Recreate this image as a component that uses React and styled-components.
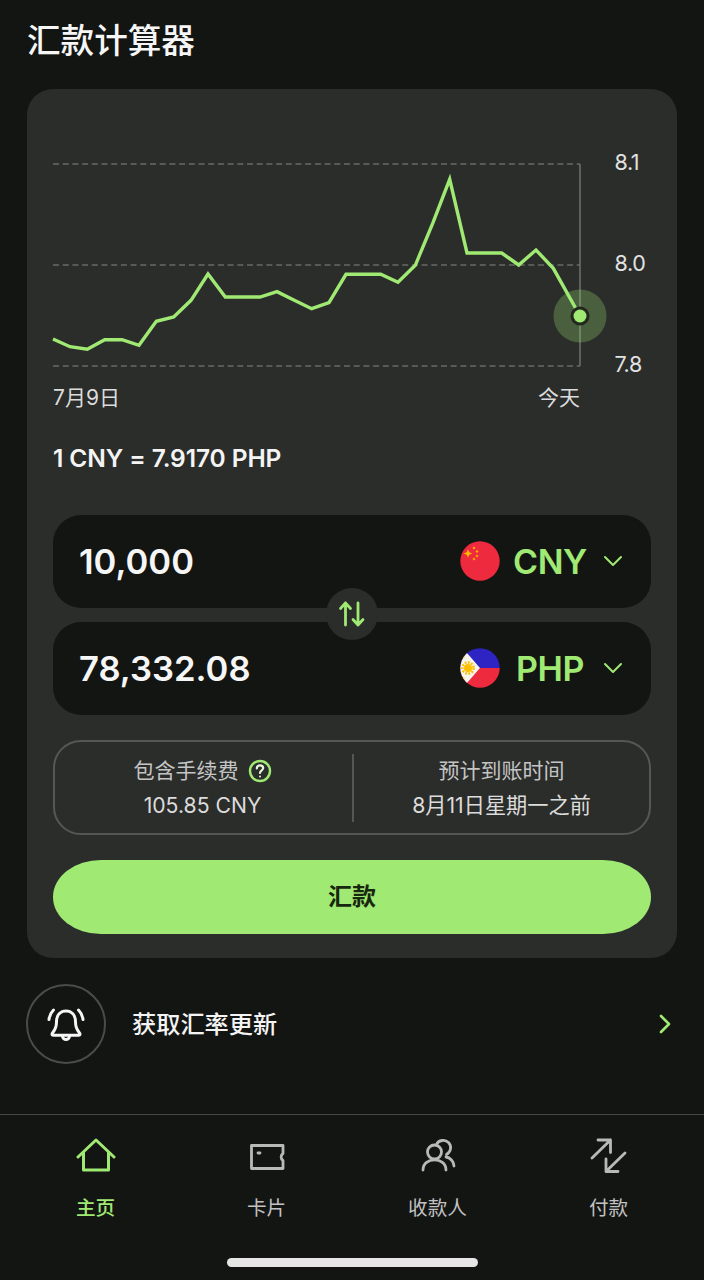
import React from 'react';
import styled, { createGlobalStyle } from 'styled-components';

const GREEN = '#a0e973';
const FONT = `Inter, "Noto Sans CJK SC", sans-serif`;

const Global = createGlobalStyle`
  html, body { margin: 0; padding: 0; background: #131513; }
  * { box-sizing: border-box; }
`;

const Screen = styled.div`
  width: 704px;
  height: 1280px;
  display: flex;
  flex-direction: column;
  background: #131513;
  color: #f4f4f4;
  font-family: ${FONT};
  overflow: hidden;
`;

const Title = styled.h1`
  margin: 0;
  padding: 17px 27px 0;
  height: 89px;
  font-size: 33.6px;
  line-height: 47px;
  font-weight: 500;
  color: #f6f6f6;
`;

const Card = styled.section`
  margin: 0 27px;
  height: 869px;
  padding: 75px 26px 0;
  border-radius: 26px;
  background: #2b2d2b;
  display: flex;
  flex-direction: column;
`;

const ChartRow = styled.div`
  display: grid;
  grid-template-columns: 529px 1fr;
  column-gap: 33px;
  height: 216px;
`;

const Plot = styled.svg`
  display: block;
  overflow: visible;
`;

const Axis = styled.div`
  height: 228px;
  margin-top: -15px;
  margin-left: -0.5px;
  display: flex;
  flex-direction: column;
  justify-content: space-between;
  font-size: 21.5px;
  line-height: 26px;
  letter-spacing: -0.4px;
  color: #e2e2e2;
`;

const DateRow = styled.div`
  width: 527px;
  margin-top: 4px;
  display: flex;
  justify-content: space-between;
  font-size: 21px;
  line-height: 28px;
  color: #dcdcdc;
`;

const Rate = styled.div`
  margin-top: 30px;
  font-size: 24.5px;
  line-height: 32px;
  font-weight: 600;
  letter-spacing: -0.1px;
  color: #f4f4f4;
`;

const Fields = styled.div`
  position: relative;
  margin-top: 41px;
  display: flex;
  flex-direction: column;
  gap: 14.5px;
`;

const Field = styled.div`
  height: 92.5px;
  padding: 0 28px 0 26px;
  border-radius: 28px;
  background: #131513;
  display: flex;
  align-items: center;
`;

const Amount = styled.div`
  flex: 1;
  font-size: 34.6px;
  font-weight: 600;
  color: #f6f6f6;
`;

const Code = styled.div`
  width: 90px;
  margin-left: 5px;
  text-align: center;
  font-size: 34px;
  font-weight: 600;
  letter-spacing: -0.4px;
  color: ${GREEN};
`;

const Caret = styled.svg`
  display: block;
  margin-left: 8px;
`;

const Swap = styled.div`
  position: absolute;
  left: 273px;
  top: 73px;
  width: 52px;
  height: 52px;
  border-radius: 50%;
  background: #2b2d2b;
  display: flex;
  align-items: center;
  justify-content: center;
`;

const Info = styled.div`
  margin-top: 25.5px;
  height: 95px;
  border: 2px solid #555755;
  border-radius: 28px;
  display: grid;
  grid-template-columns: 297px 2px 1fr;
  align-items: center;
`;

const InfoCol = styled.div`
  display: flex;
  flex-direction: column;
  align-items: center;
  gap: 6px;
  padding-right: ${(p) => (p.$first ? '2px' : '0')};
  font-size: 21.2px;
  line-height: 28px;
  color: #dcdcdc;
`;

const InfoHead = styled.div`
  display: flex;
  align-items: center;
  gap: 9px;
  font-size: 21px;
  color: #c4c4c4;
`;

const Divider = styled.div`
  width: 2px;
  height: 68px;
  background: #555755;
`;

const Submit = styled.button`
  margin-top: 25px;
  height: 73.5px;
  padding: 0 0 4px;
  border: 0;
  border-radius: 48px / 36.75px;
  background: ${GREEN};
  color: #18280f;
  font-family: ${FONT};
  font-size: 24px;
  font-weight: 700;
`;

const AlertRow = styled.div`
  margin: 26px 32px 0 26px;
  display: flex;
  align-items: center;
`;

const BellRing = styled.div`
  width: 80px;
  height: 80px;
  border: 2px solid #4a4c4a;
  border-radius: 50%;
  display: flex;
  align-items: center;
  justify-content: center;
`;

const AlertLabel = styled.div`
  flex: 1;
  margin-left: 26px;
  padding-bottom: 4px;
  font-size: 24.2px;
  font-weight: 500;
  color: #f4f4f4;
`;

const Nav = styled.nav`
  margin-top: 50px;
  flex: 1;
  padding: 23px 10px 0;
  border-top: 1.5px solid #464846;
  position: relative;
  display: grid;
  grid-template-columns: repeat(4, 1fr);
  align-items: start;
`;

const NavItem = styled.div`
  display: flex;
  flex-direction: column;
  align-items: center;
  gap: 20px;
  font-size: 19.6px;
  line-height: 28px;
  color: ${(p) => (p.$active ? GREEN : '#c2c2c2')};
  font-weight: ${(p) => (p.$active ? 500 : 400)};
`;

const Handle = styled.div`
  position: absolute;
  left: 227px;
  top: 143px;
  width: 251px;
  height: 9px;
  border-radius: 5px;
  background: #e6e6e6;
`;

// chart points in px, origin is the left end of the top gridline
const points = [
  [0, 175], [17, 182.7], [34.3, 185.3], [51.7, 175.7], [69, 175.7], [86, 181.3],
  [103.3, 157.3], [120.7, 153], [138, 136.3], [155, 110], [172.3, 133], [189.7, 133],
  [207, 133], [224, 127.7], [241.3, 136.3], [258.7, 144.7], [276, 138.7], [293, 110.3],
  [310.5, 110.3], [327.7, 110.3], [345, 118.3], [362.3, 101.3], [379.7, 59.3], [396.7, 15.3],
  [414, 89], [431.3, 89], [448.7, 89], [465.7, 101], [483, 86], [500.3, 104.3], [527, 152],
];

function Chart() {
  const path = points.map((p) => p.join(',')).join(' ');
  return (
    <Plot width="529" height="204" viewBox="0 0 529 204">
      {[0, 101, 202].map((y) => (
        <line key={y} x1="0" x2="527" y1={y} y2={y} stroke="#686a68" strokeWidth="1.3" strokeDasharray="6 3.7" />
      ))}
      <line x1="527" x2="527" y1="0" y2="202" stroke="#6f716f" strokeWidth="1.5" />
      <polyline points={path} fill="none" stroke={GREEN} strokeWidth="3.4" strokeLinejoin="miter" />
      <circle cx="527" cy="152" r="26.5" fill={GREEN} fillOpacity="0.27" />
      <circle cx="527" cy="152" r="9.5" fill="#22281e" />
      <circle cx="527" cy="152" r="6.5" fill={GREEN} />
    </Plot>
  );
}

function ChinaFlag() {
  const stars = [[14, 7], [17, 10.5], [17, 15], [14, 18]];
  return (
    <svg width="40" height="40" viewBox="0 0 40 40">
      <circle cx="20" cy="20" r="19.7" fill="#ee2a3e" />
      <polygon points="8,8.2 9.3,11.2 12.5,12.5 9.3,13.8 8,16.8 6.7,13.8 3.5,12.5 6.7,11.2" fill="#fdb600" />
      {stars.map(([x, y]) => (
        <rect key={x + '-' + y} x={x - 1.1} y={y - 1.1} width="2.2" height="2.2" fill="#fdb000" transform={`rotate(45 ${x} ${y})`} />
      ))}
    </svg>
  );
}

function PhilippinesFlag() {
  return (
    <svg width="40" height="40" viewBox="0 0 40 40">
      <defs>
        <clipPath id="ph">
          <circle cx="20" cy="20" r="19.7" />
        </clipPath>
      </defs>
      <g clipPath="url(#ph)">
        <rect width="40" height="20" fill="#2e24c4" />
        <rect y="20" width="40" height="20" fill="#ee2a3e" />
        <polygon points="0,-3 20,20 0,43" fill="#f6f4ee" />
        <circle cx="8" cy="20" r="4" fill="#fdc000" />
        <circle cx="8" cy="20" r="5.6" fill="none" stroke="#fdc000" strokeWidth="2.6" strokeDasharray="1.8 1.4" />
        <circle cx="3.5" cy="9.5" r="1" fill="#fdc000" />
        <circle cx="3.5" cy="30.5" r="1" fill="#fdc000" />
      </g>
    </svg>
  );
}

function ChevronDown() {
  return (
    <Caret width="20" height="12" viewBox="0 0 20 12">
      <path d="M2 2 L10 10 L18 2" fill="none" stroke={GREEN} strokeWidth="2" strokeLinecap="round" strokeLinejoin="round" />
    </Caret>
  );
}

function SwapIcon() {
  return (
    <svg width="28" height="28" viewBox="0 0 28 28" fill="none" stroke={GREEN} strokeWidth="2.8" strokeLinecap="round" strokeLinejoin="round">
      <path d="M7.5 25 V3 M2.5 8.5 L7.5 3 L12.5 8.5" />
      <path d="M20 3 V25 M15 19.5 L20 25 L25 19.5" />
    </svg>
  );
}

function HelpIcon() {
  return (
    <svg width="24" height="24" viewBox="0 0 24 24" fill="none" stroke={GREEN} strokeWidth="2.4" strokeLinecap="round">
      <circle cx="12" cy="12" r="10" />
      <path d="M8.8 9.4 C8.8 7.4 10.3 6.3 12 6.3 C13.9 6.3 15.2 7.5 15.2 9.1 C15.2 11.4 12 11.4 12 14" stroke="#e8f5de" strokeWidth="2.2" />
      <circle cx="12" cy="17.5" r="1" fill="#e8f5de" stroke="none" />
    </svg>
  );
}

function BellIcon() {
  return (
    <svg width="40" height="40" viewBox="0 0 40 40" fill="none" stroke="#f6f6f6" strokeWidth="3" strokeLinecap="round" strokeLinejoin="round">
      <path d="M6 30 C6 28.3 10.5 26.5 10.5 18 C10.5 11 14.5 7 20 7 C25.5 7 29.5 11 29.5 18 C29.5 26.5 34 28.3 34 30 C34 31 33 31.3 32.5 31.3 H7.5 C7 31.3 6 31 6 30 Z" />
      <path d="M16.5 32 C16.5 36.5 23.5 36.5 23.5 32" />
      <path d="M3 15.5 C3.5 11.5 5 8.5 7.5 6" />
      <path d="M37 15.5 C36.5 11.5 35 8.5 32.5 6" />
    </svg>
  );
}

function ChevronRight() {
  return (
    <svg width="14" height="22" viewBox="0 0 14 22" fill="none" stroke={GREEN} strokeWidth="2.6" strokeLinecap="round" strokeLinejoin="round">
      <path d="M3 3 L11 11 L3 19" />
    </svg>
  );
}

function HomeIcon() {
  return (
    <svg width="40" height="36" viewBox="0 0 40 36" fill="none" stroke={GREEN} strokeWidth="3" strokeLinecap="round" strokeLinejoin="round">
      <path d="M2 19 L20 2 L38 19" />
      <path d="M7.5 14.5 V32 H32.5 V14.5" />
    </svg>
  );
}

function CardIcon() {
  return (
    <svg width="40" height="36" viewBox="0 0 40 36" fill="none" stroke="#b9b9b9" strokeWidth="2.8" strokeLinecap="round" strokeLinejoin="round">
      <path d="M4.5 7.5 H36 V15.5 C33.5 17 33.5 21 36 22.5 V30.5 H4.5 Z" />
      <path d="M11 15 H13" />
    </svg>
  );
}

function PeopleIcon() {
  return (
    <svg width="40" height="36" viewBox="0 0 40 36" fill="none" stroke="#b9b9b9" strokeWidth="2.8" strokeLinecap="round" strokeLinejoin="round">
      <circle cx="16.5" cy="14" r="7" />
      <path d="M5 32 C5 18.5 28 18.5 28 32" />
      <path d="M18.5 6.5 C20.5 2 27 1 30.5 4.5 C34 8 33 14 28.5 16.5" />
      <path d="M28 19 C32 19.5 36 23.5 36 28" />
    </svg>
  );
}

function TransferIcon() {
  return (
    <svg width="40" height="36" viewBox="0 0 40 36" fill="none" stroke="#b9b9b9" strokeWidth="2.8" strokeLinecap="round" strokeLinejoin="round">
      <path d="M3 20 L21.5 2 M9 2 H21.5 V14.5" />
      <path d="M36 15 L17 33.5 M17 21 V33.5 H29" />
    </svg>
  );
}

export default function App() {
  return (
    <Screen>
      <Global />
      <Title>汇款计算器</Title>
      <Card>
        <ChartRow>
          <Chart />
          <Axis>
            <span>8.1</span>
            <span>8.0</span>
            <span>7.8</span>
          </Axis>
        </ChartRow>
        <DateRow>
          <span>7月9日</span>
          <span>今天</span>
        </DateRow>
        <Rate>1 CNY = 7.9170 PHP</Rate>
        <Fields>
          <Field>
            <Amount>10,000</Amount>
            <ChinaFlag />
            <Code>CNY</Code>
            <ChevronDown />
          </Field>
          <Field>
            <Amount>78,332.08</Amount>
            <PhilippinesFlag />
            <Code>PHP</Code>
            <ChevronDown />
          </Field>
          <Swap>
            <SwapIcon />
          </Swap>
        </Fields>
        <Info>
          <InfoCol $first>
            <InfoHead>
              包含手续费
              <HelpIcon />
            </InfoHead>
            <span>105.85 CNY</span>
          </InfoCol>
          <Divider />
          <InfoCol>
            <InfoHead>预计到账时间</InfoHead>
            <span>8月11日星期一之前</span>
          </InfoCol>
        </Info>
        <Submit>汇款</Submit>
      </Card>
      <AlertRow>
        <BellRing>
          <BellIcon />
        </BellRing>
        <AlertLabel>获取汇率更新</AlertLabel>
        <ChevronRight />
      </AlertRow>
      <Nav>
        <NavItem $active>
          <HomeIcon />
          主页
        </NavItem>
        <NavItem>
          <CardIcon />
          卡片
        </NavItem>
        <NavItem>
          <PeopleIcon />
          收款人
        </NavItem>
        <NavItem>
          <TransferIcon />
          付款
        </NavItem>
        <Handle />
      </Nav>
    </Screen>
  );
}
